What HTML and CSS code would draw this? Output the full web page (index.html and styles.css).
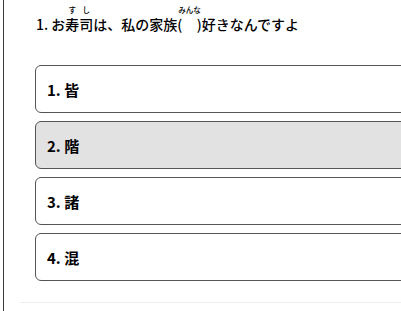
FILE: index.html
```html
<!DOCTYPE html>
<html lang="ja">
<head>
    <meta charset="UTF-8">
    <meta name="viewport" content="width=device-width, initial-scale=1.0">
    <title>問題</title>
    <link rel="stylesheet" href="styles.css">
</head>
<body>
    <div class="quiz">
        <p class="question">1. お<ruby>寿司<rt>すし</rt></ruby>は、私の家族(<ruby class="blank">　<rt>みんな</rt></ruby>)好きなんですよ</p>

        <ul class="choices">
            <li class="choice">1. 皆</li>
            <li class="choice selected">2. 階</li>
            <li class="choice">3. 諸</li>
            <li class="choice">4. 混</li>
        </ul>

        <div class="divider"></div>
    </div>
</body>
</html>
```

FILE: styles.css
```css
* {
    margin: 0;
    padding: 0;
    box-sizing: border-box;
}

body {
    font-family: "Noto Sans CJK JP", "Noto Sans", sans-serif;
    background: #fff;
    color: #000;
    overflow: hidden;
}

.quiz {
    margin-left: 3px;
    border-left: 1px solid #3a3a3a;
    height: 100vh;
    overflow: hidden;
}

.question {
    padding: 12px 0 0 32px;
    font-size: 14px;
    font-weight: 500;
    line-height: 24px;
    white-space: nowrap;
}

.question rt {
    font-size: 7.5px;
    line-height: 1;
    padding-bottom: 2px;
}

.choices {
    list-style: none;
    margin: 29px 0 0 31px;
    display: flex;
    flex-direction: column;
    gap: 8px;
}

.choice {
    width: 420px;
    height: 48px;
    border: 1px solid #555;
    border-radius: 6px;
    padding-left: 11px;
    display: flex;
    align-items: center;
    font-size: 15px;
    font-weight: 700;
    background: #fff;
}

.choice.selected {
    background: #e2e2e2;
}

.divider {
    margin: 21px 0 0 16px;
    border-top: 1px solid #eee;
}
```
